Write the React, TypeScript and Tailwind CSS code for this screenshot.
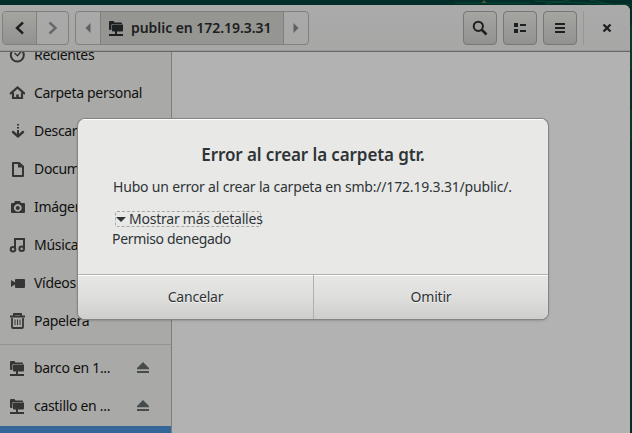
import type { ReactNode } from "react";

const ink = "#2e3436";

function Ico({ children, className = "" }: { children: ReactNode; className?: string }) {
  return (
    <svg viewBox="0 0 16 16" width="16" height="16" className={`shrink-0 ${className}`} fill="currentColor">
      {children}
    </svg>
  );
}

const NetFolder = () => (
  <Ico>
    <path d="M1 2Q1 1 2 1h3.500l1 1.500H13q1 0 1 1V4H4.500Q3.500 4 3.400 5v5H2Q1 10 1 9z" />
    <path d="M4 5.500Q4 4.600 5 4.600h10v5.900q0 1-1 1H9V14h6v2H1v-2h6v-2.500H5q-1 0-1-1z" />
  </Ico>
);
const Clock = () => (
  <Ico>
    <circle cx="8.300" cy="8" r="6.500" fill="none" stroke="currentColor" strokeWidth="2" />
    <path d="M5.500 6l3 2.700 3.500-4" fill="none" stroke="currentColor" strokeWidth="1.400" />
  </Ico>
);
const Home = () => (
  <Ico>
    <path d="M1 9L8.500 2.500 16 9M4 7.500V13h9V7.500" fill="none" stroke="currentColor" strokeWidth="2.200" />
    <path d="M7.200 9.500h2.600V14H7.200z" />
  </Ico>
);
const Down = () => (
  <Ico>
    <path d="M8 1h2v1.500H8zM8 4h2v1.500H8zM8 7h2v6H8z" />
    <path d="M4 9l5 4.500L14 9" fill="none" stroke="currentColor" strokeWidth="2.400" strokeLinecap="round" />
  </Ico>
);
const Doc = () => (
  <Ico>
    <path d="M4 2h6l4 3.500V15H4z" fill="none" stroke="currentColor" strokeWidth="2" strokeLinejoin="round" />
    <path d="M9 2v4.500h5z" />
  </Ico>
);
const Camera = () => (
  <Ico>
    <path fillRule="evenodd" d="M5 4l1-2h5l1 2h3q1 0 1 1v8q0 1-1 1H3q-1 0-1-1V5q0-1 1-1zM8.800 5a3.900 3.900 0 1 0 .01 0zM8.800 7a2 2 0 1 1-.01 0z" />
  </Ico>
);
const Music = () => (
  <Ico>
    <path d="M6 11.500V2h9v9" fill="none" stroke="currentColor" strokeWidth="2" />
    <circle cx="4" cy="12.200" r="2.300" fill="none" stroke="currentColor" strokeWidth="2" />
    <circle cx="12.700" cy="11.700" r="2.300" fill="none" stroke="currentColor" strokeWidth="2" />
  </Ico>
);
const Video = () => (
  <Ico>
    <path d="M7 4h8q1 0 1 1v7q0 1-1 1H7q-1 0-1-1V9.500L2 12V5l4 2.500V5q0-1 1-1z" />
  </Ico>
);
const Trash = () => (
  <Ico>
    <path d="M1 3.500h15M5 3V1h7v2" fill="none" stroke="currentColor" strokeWidth="1.800" />
    <path d="M3 5v9q0 1 1 1h9q1 0 1-1V5" fill="none" stroke="currentColor" strokeWidth="1.800" />
    <path d="M5.500 6.500h1V12h-1zM8 6.500h1V12H8zM10.500 6.500h1V12h-1z" />
  </Ico>
);
const Eject = () => (
  <svg viewBox="0 0 14 12" width="14" height="12" className="ml-auto mr-[21px] shrink-0 text-[#464b4c]" fill="currentColor">
    <path d="M7 0L13 6v1.300H1V6zM1 9h12v2H1z" />
  </svg>
);

function Row({ icon, children, eject = false }: { icon: ReactNode; children: ReactNode; eject?: boolean }) {
  return (
    <li className="flex h-[38px] shrink-0 items-center pl-[9px] text-[#343534]">
      {icon}
      <span className="ml-[9px] text-[14px] leading-[20px] tracking-[-0.310px] text-[#101010]">{children}</span>
      {eject && <Eject />}
    </li>
  );
}

const btn = "flex h-[34px] w-[34px] items-center justify-center rounded-[4px] border border-[#777773] bg-gradient-to-b from-[#a4a4a1] to-[#929290]";

export default function App() {
  return (
    <div className="relative h-[433px] w-[632px] overflow-hidden bg-[#022d29] font-['Noto_Sans',sans-serif]" style={{ color: ink }}>
      <svg className="absolute left-0 top-0" width="632" height="433" fill="none" stroke="#0b4934">
        <path d="M455 3h75M535 1l96 4M545 4l25-4M590 0l35 8M631 25v45M631 110v30" />
        <path d="M481 3l3-3 3 3z" fill="#3d5936" stroke="none" />
      </svg>
      <div className="flex h-full flex-col pt-[5px]">
        <div className="relative flex h-[428px] w-[630px] flex-col overflow-hidden rounded-tr-[6px] bg-[#b2b2b2]">
          <header className="flex h-[47px] shrink-0 items-start border-b border-[#686866] bg-gradient-to-b from-[#aaaaaa] to-[#a7a7a6] pl-[2px] pt-[6px] shadow-[inset_0_-1px_0_#989896]">
            <div className="flex h-[34px] w-[67px] overflow-hidden rounded-[4px] border border-[#80807d]">
              <div className="flex w-[34px] items-center justify-center border-r border-[#80807d] bg-gradient-to-b from-[#a4a4a1] to-[#929290]">
                <svg width="12" height="14" viewBox="0 0 12 14" fill="none" stroke="#1c2021" strokeWidth="2.400"><path d="M9 1.500L3 7l6 5.500" /></svg>
              </div>
              <div className="flex flex-1 items-center justify-center">
                <svg width="12" height="14" viewBox="0 0 12 14" fill="none" stroke="#666968" strokeWidth="2.400"><path d="M2.500 1.500l6 5.500-6 5.500" /></svg>
              </div>
            </div>
            <div className="ml-[6px] flex h-[34px] w-[234px] overflow-hidden rounded-[4px] border border-[#80807d]">
              <div className="flex w-[25px] items-center justify-center border-r border-[#80807d] text-[#5d6160]">
                <svg width="6" height="10" viewBox="0 0 6 10" fill="currentColor"><path d="M5.500 0v10L.5 5z" /></svg>
              </div>
              <div className="flex w-[183px] items-center border-r border-[#80807d] bg-[#959592] pl-[7px] text-[#1c2021]">
                <NetFolder />
                <span className="ml-[7px] whitespace-nowrap text-[14px] font-semibold leading-[20px] tracking-[-0.050px]">public en 172.19.3.31</span>
              </div>
              <div className="flex flex-1 items-center justify-center text-[#5d6160]">
                <svg width="6" height="10" viewBox="0 0 6 10" fill="currentColor"><path d="M.5 0v10l5-5z" /></svg>
              </div>
            </div>
            <div className="ml-[154px] flex gap-[6px] text-[#1c2021]">
              <div className={btn}>
                <Ico><circle cx="6.300" cy="6.300" r="4.600" fill="none" stroke="currentColor" strokeWidth="2" /><path d="M9.500 9.500l5 5" stroke="currentColor" strokeWidth="2.500" /></Ico>
              </div>
              <div className={btn}>
                <Ico><path d="M2 3h4v4H2zM2 9h4v4H2zM8 4h6v2H8zM8 10h6v2H8z" /></Ico>
              </div>
              <div className={btn}>
                <Ico><path d="M3 3h10v2H3zM3 7h10v2H3zM3 11h10v2H3z" /></Ico>
              </div>
            </div>
            <div className="ml-[6px] h-[34px] w-px bg-[#979795]" />
            <div className="ml-[15px] mt-[9px] text-[#1c2021]">
              <Ico><path d="M4.500 4.500l7 7M11.500 4.500l-7 7" fill="none" stroke="currentColor" strokeWidth="2.300" /></Ico>
            </div>
          </header>

          <div className="flex min-h-0 flex-1">
            <aside className="w-[172px] overflow-hidden border-r border-[#7e7e7c] bg-[#a9a9a7]">
              <ul className="-mt-[16px] flex flex-col">
                <Row icon={<Clock />}>Recientes</Row>
                <Row icon={<Home />}>Carpeta personal</Row>
                <Row icon={<Down />}>Descargas</Row>
                <Row icon={<Doc />}>Documentos</Row>
                <Row icon={<Camera />}>Imágenes</Row>
                <Row icon={<Music />}>Música</Row>
                <Row icon={<Video />}>Vídeos</Row>
                <Row icon={<Trash />}>Papelera</Row>
                <li className="mb-[4px] mt-[4px] h-px shrink-0 bg-[#949492]" />
                <Row icon={<NetFolder />} eject>barco en 1...</Row>
                <Row icon={<NetFolder />} eject>castillo en ...</Row>
                <li className="mt-px h-[38px] shrink-0 bg-[#34669a]" />
              </ul>
            </aside>
            <main className="flex-1" />
          </div>
        </div>
      </div>

      <div role="dialog" className="absolute left-[78px] top-[119px] flex h-[200px] w-[470px] flex-col overflow-hidden rounded-[7px] bg-[#e8e8e7] shadow-[0_0_0_1px_#858583,0_1px_3px_#00000055]">
        <div className="flex h-[155px] shrink-0 flex-col border-t border-white pl-[35px]">
          <h1 className="-ml-[35px] mt-[23px] text-center text-[17px] font-semibold leading-[24px] tracking-[-0.100px]">Error al crear la carpeta gtr.</h1>
          <p className="mt-[10px] whitespace-nowrap text-[14px] leading-[20px] tracking-[-0.190px]">Hubo un error al crear la carpeta en smb://172.19.3.31/public/.</p>
          <div className="ml-[2px] mt-[14px] flex h-[16px] w-[146px] items-center whitespace-nowrap rounded-[2px] border border-dashed border-[#a6a8a6]">
            <svg width="10" height="5" viewBox="0 0 10 5" className="shrink-0" fill="currentColor"><path d="M0 0h10L5 5z" /></svg>
            <span className="ml-[3px] text-[14px] leading-[20px] tracking-[-0.230px]">Mostrar más detalles</span>
          </div>
          <p className="-ml-px mt-[2px] text-[14px] leading-[20px] tracking-[-0.330px]">Permiso denegado</p>
        </div>
        <div className="flex flex-1 border-t border-[#b0b0ae] bg-gradient-to-b from-[#e7e7e6] via-[#dededd] to-[#cececd] text-[14px] tracking-[-0.200px] [text-shadow:0_1px_#ffffffaa]">
          <div className="flex w-[236px] items-center justify-center border-r border-[#b0b0ae] pb-[2px] shadow-[inset_0_1px_white]">Cancelar</div>
          <div className="flex flex-1 items-center justify-center pb-[2px] shadow-[inset_0_1px_white]">Omitir</div>
        </div>
      </div>
    </div>
  );
}
